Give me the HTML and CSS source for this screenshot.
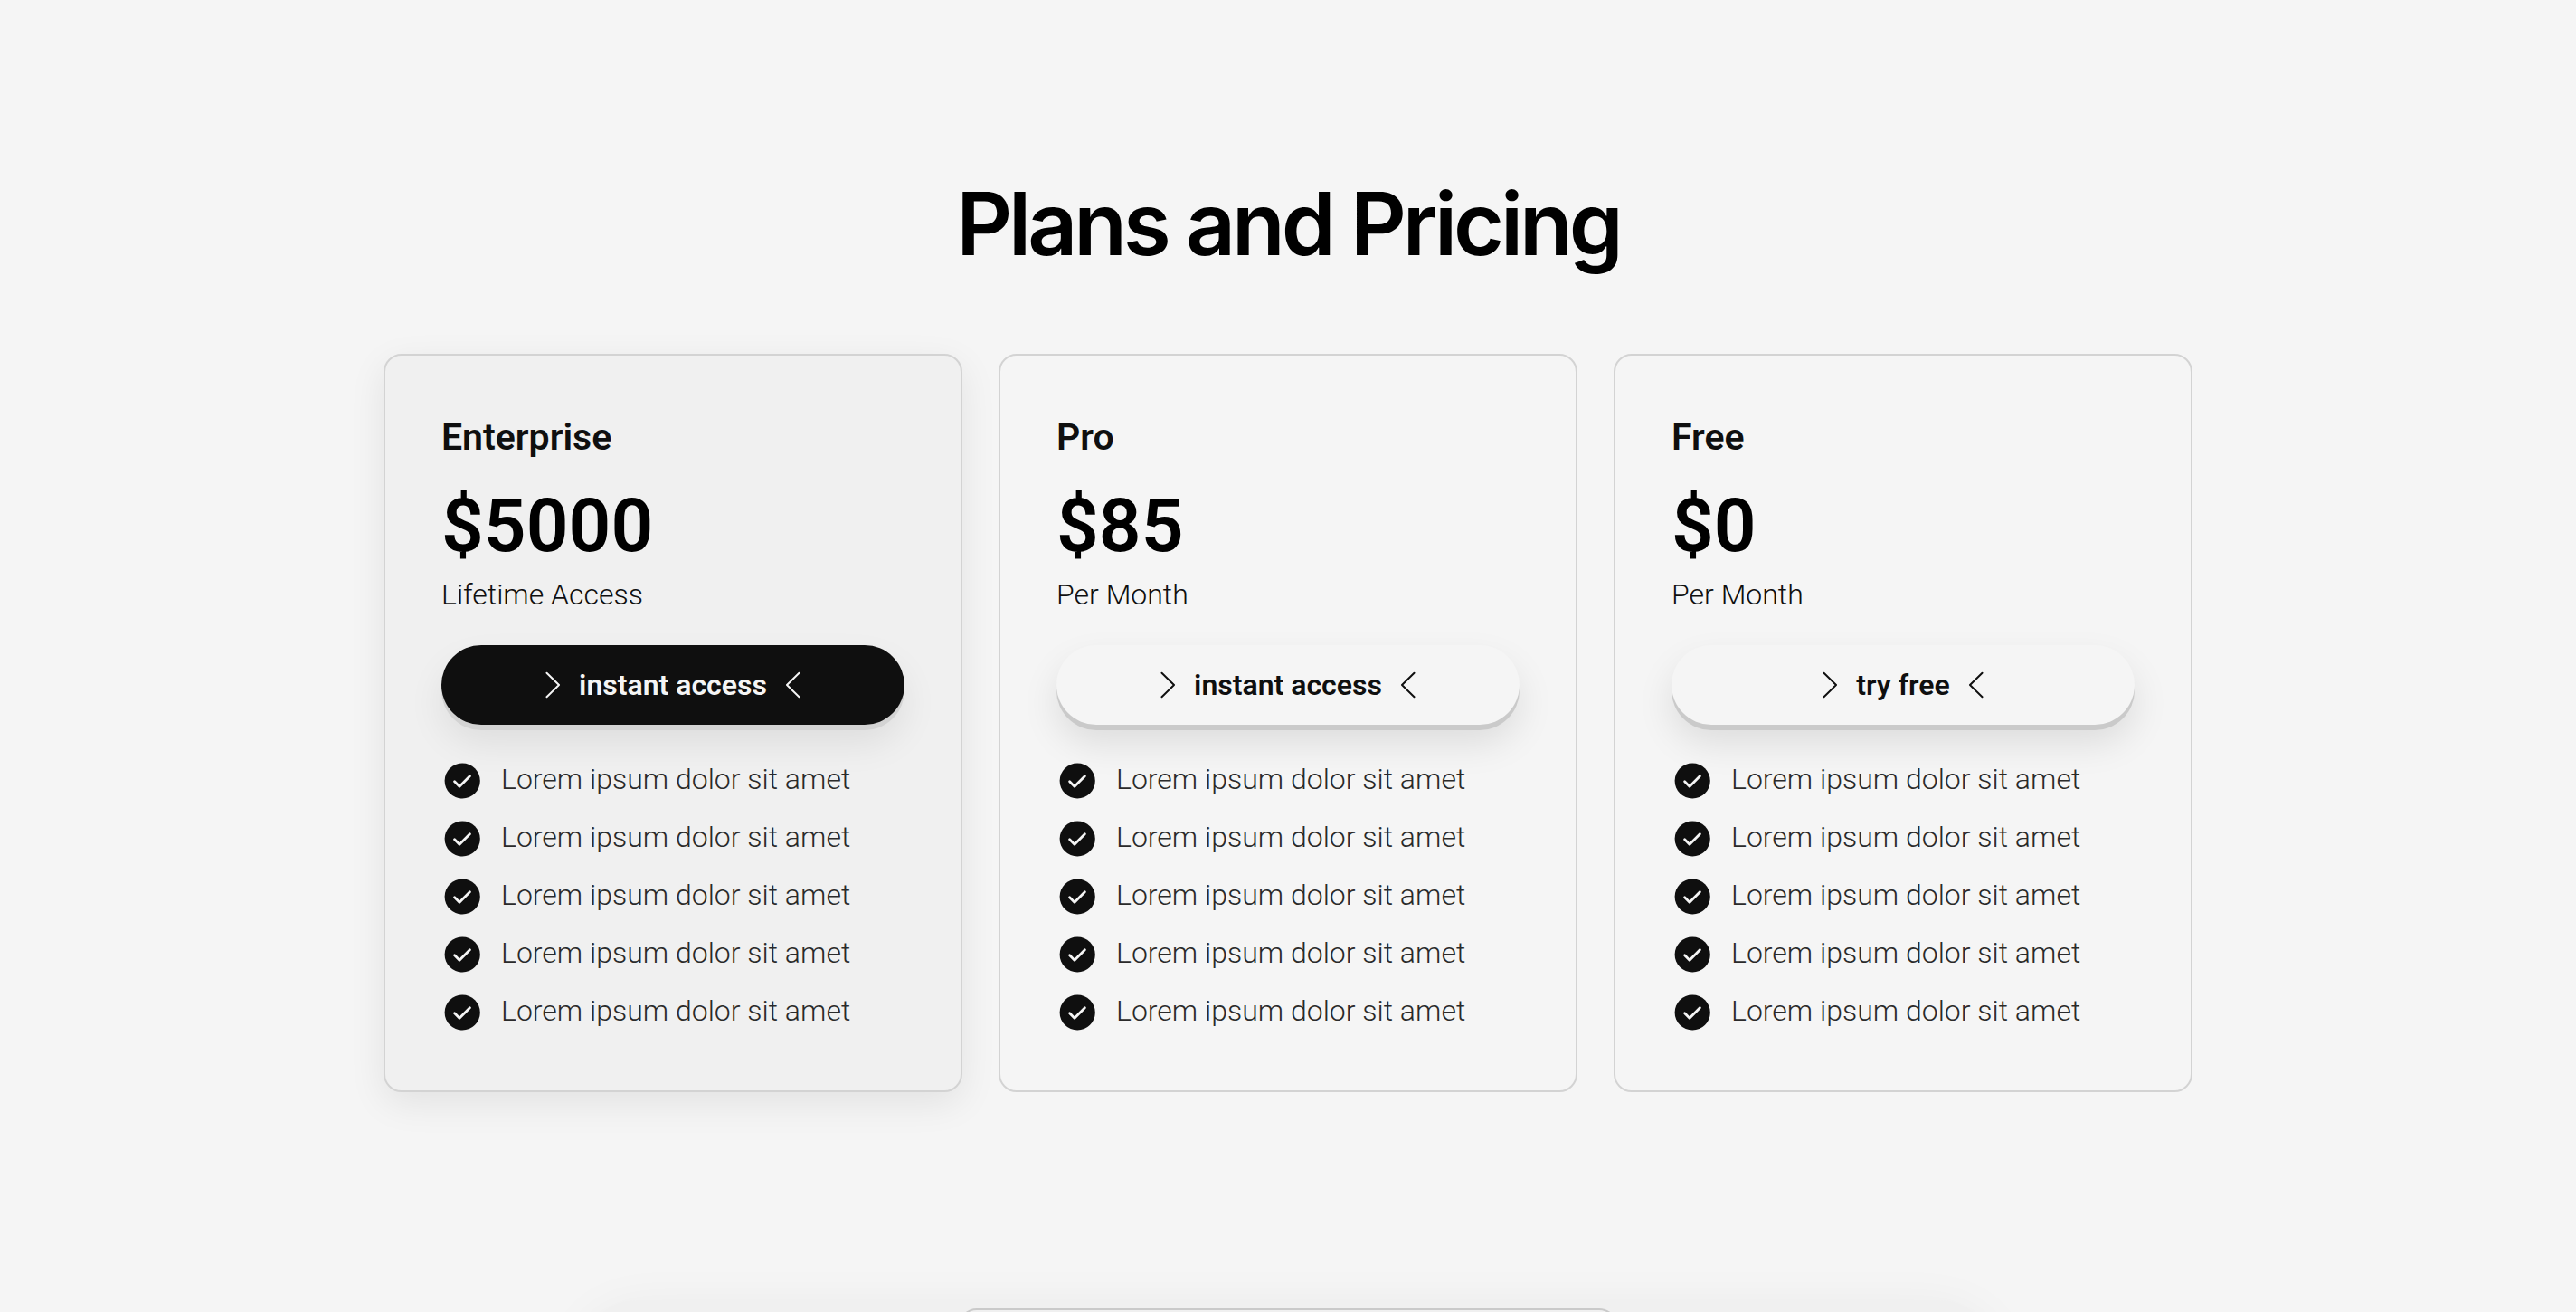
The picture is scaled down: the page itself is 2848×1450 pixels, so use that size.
FILE: index.html
```
<!DOCTYPE html>
<html lang="en">
<head>
  <meta charset="UTF-8">
  <meta name="viewport" content="width=device-width, initial-scale=1">
  <title>Plans and Pricing</title>
  <link rel="stylesheet" href="styles.css">
</head>
<body>
  <!-- shared icons -->
  <svg class="sprite" aria-hidden="true">
    <symbol id="check" viewBox="0 0 48 48">
      <circle cx="23.2" cy="24" r="19.6" fill="#0f0f0f"/>
      <path d="M14.6 24.8l5.4 5.4 11.4-11.4" fill="none" stroke="#f5f5f5" stroke-width="2.8" stroke-linecap="round" stroke-linejoin="round"/>
    </symbol>
    <symbol id="chevron" viewBox="0 0 32 32">
      <path d="M8.5 2.7L22 16 8.5 29.3" fill="none" stroke="currentColor" stroke-width="2" stroke-linecap="round" stroke-linejoin="round"/>
    </symbol>
  </svg>

  <section class="pricing">
    <h1>Plans and Pricing</h1>

    <div class="cards">
      <div class="card featured">
        <h2>Enterprise</h2>
        <p class="price">$5000</p>
        <p class="period">Lifetime Access</p>
        <button class="btn btn-dark" type="button">
          <svg class="chevron"><use href="#chevron"/></svg>
          <span>instant access</span>
          <svg class="chevron flip"><use href="#chevron"/></svg>
        </button>
        <ul class="features">
          <li><svg class="check"><use href="#check"/></svg><span>Lorem ipsum dolor sit amet</span></li>
          <li><svg class="check"><use href="#check"/></svg><span>Lorem ipsum dolor sit amet</span></li>
          <li><svg class="check"><use href="#check"/></svg><span>Lorem ipsum dolor sit amet</span></li>
          <li><svg class="check"><use href="#check"/></svg><span>Lorem ipsum dolor sit amet</span></li>
          <li><svg class="check"><use href="#check"/></svg><span>Lorem ipsum dolor sit amet</span></li>
        </ul>
      </div>

      <div class="card">
        <h2>Pro</h2>
        <p class="price">$85</p>
        <p class="period">Per Month</p>
        <button class="btn" type="button">
          <svg class="chevron"><use href="#chevron"/></svg>
          <span>instant access</span>
          <svg class="chevron flip"><use href="#chevron"/></svg>
        </button>
        <ul class="features">
          <li><svg class="check"><use href="#check"/></svg><span>Lorem ipsum dolor sit amet</span></li>
          <li><svg class="check"><use href="#check"/></svg><span>Lorem ipsum dolor sit amet</span></li>
          <li><svg class="check"><use href="#check"/></svg><span>Lorem ipsum dolor sit amet</span></li>
          <li><svg class="check"><use href="#check"/></svg><span>Lorem ipsum dolor sit amet</span></li>
          <li><svg class="check"><use href="#check"/></svg><span>Lorem ipsum dolor sit amet</span></li>
        </ul>
      </div>

      <div class="card">
        <h2>Free</h2>
        <p class="price">$0</p>
        <p class="period">Per Month</p>
        <button class="btn" type="button">
          <svg class="chevron"><use href="#chevron"/></svg>
          <span>try free</span>
          <svg class="chevron flip"><use href="#chevron"/></svg>
        </button>
        <ul class="features">
          <li><svg class="check"><use href="#check"/></svg><span>Lorem ipsum dolor sit amet</span></li>
          <li><svg class="check"><use href="#check"/></svg><span>Lorem ipsum dolor sit amet</span></li>
          <li><svg class="check"><use href="#check"/></svg><span>Lorem ipsum dolor sit amet</span></li>
          <li><svg class="check"><use href="#check"/></svg><span>Lorem ipsum dolor sit amet</span></li>
          <li><svg class="check"><use href="#check"/></svg><span>Lorem ipsum dolor sit amet</span></li>
        </ul>
      </div>
    </div>
  </section>

  <div class="panel">
    <div class="panel-tile"></div>
  </div>
</body>
</html>
```

FILE: styles.css
```
* {
  box-sizing: border-box;
}
html {
  scrollbar-width: none;
}
body {
  margin: 0;
  background-color: #f5f5f5;
  color: #0f0f0f;
  font-family: Roboto, Arial, sans-serif;
}
h1, h2, p, ul {
  margin: 0;
  padding: 0;
}
.sprite {
  display: none;
}

.pricing {
  padding: 187px 40px 230px;
}
.pricing h1 {
  margin-bottom: 84px;
  color: #000;
  font-family: Inter, Arial, sans-serif;
  font-size: 96px;
  font-weight: 600;
  line-height: 120px;
  letter-spacing: -4px;
  text-align: center;
}
.cards {
  display: grid;
  grid-template-columns: repeat(3, 1fr);
  gap: 40px;
  max-width: 2000px;
  margin: 0 auto;
}

.card {
  padding: 62px;
  border: 2px solid #d3d3d3;
  border-radius: 20px;
}
.card.featured {
  background-color: #f0f0f0;
  box-shadow: 0 12px 40px rgba(0,0,0,0.08);
}
.card h2 {
  margin-bottom: 16px;
  font-size: 41px;
  font-weight: 600;
  line-height: 56px;
}
.price {
  color: #000;
  font-size: 82px;
  font-weight: 600;
  line-height: 108px;
}
.period {
  font-size: 32px;
  font-weight: 300;
  line-height: 44px;
}

.btn {
  display: flex;
  align-items: center;
  justify-content: center;
  gap: 12px;
  width: 100%;
  height: 88px;
  margin: 34px 0 38px;
  padding: 0;
  border: none;
  border-radius: 48px;
  background-color: #f5f5f5;
  color: #0f0f0f;
  box-shadow: 0 6px 0 #cacaca, 0 20px 40px rgba(0,0,0,0.1);
  font-family: inherit;
  font-size: 32px;
  font-weight: 600;
  cursor: pointer;
}
.btn-dark {
  background-color: #0f0f0f;
  color: #f5f5f5;
  box-shadow: 0 6px 0 #d3d3d3, 0 20px 40px rgba(0,0,0,0.08);
}
.chevron {
  width: 32px;
  height: 32px;
}
.flip {
  transform: scaleX(-1);
}

.features {
  display: flex;
  flex-direction: column;
  gap: 16px;
  list-style: none;
}
.features li {
  display: flex;
  gap: 18px;
  color: #2a2a2a;
  font-size: 32px;
  font-weight: 300;
  line-height: 44px;
}
.check {
  flex: none;
  width: 48px;
  height: 48px;
}

.panel {
  max-width: 1560px;
  margin: 0 auto;
  padding-top: 9px;
  border-radius: 60px;
  background-color: #f0f0f0;
  box-shadow: 0 12px 60px rgba(0,0,0,0.06);
}
.panel-tile {
  max-width: 728px;
  height: 120px;
  margin: 0 auto;
  border: 2px solid #cacaca;
  border-radius: 20px;
  background-color: #f0f0f0;
}
```
